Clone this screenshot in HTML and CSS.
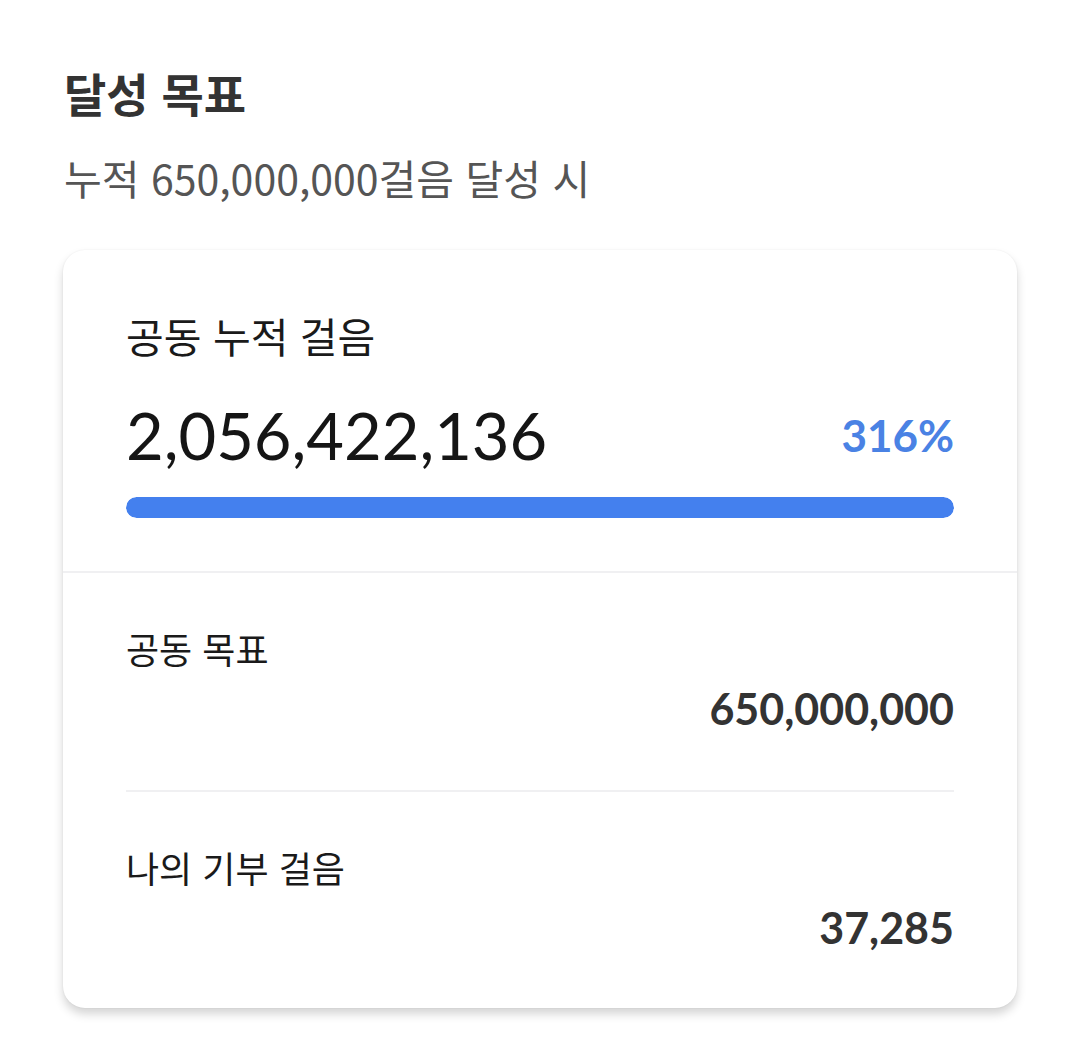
FILE: index.html
```html
<!DOCTYPE html>
<html lang="ko">
<head>
<meta charset="utf-8">
<link rel="stylesheet" href="styles.css">
</head>
<body>
<main class="page">
  <h1 class="title">달성 목표</h1>
  <p class="subtitle">누적 650,000,000걸음 달성 시</p>
  <section class="card">
    <div class="card-top">
      <div class="label-lg">공동 누적 걸음</div>
      <div class="total-row">
        <span class="total">2,056,422,136</span>
        <span class="percent">316%</span>
      </div>
      <div class="bar"><div class="bar-fill" style="width:100%"></div></div>
    </div>
    <div class="card-bottom">
      <div class="stat">
        <div class="label">공동 목표</div>
        <div class="value">650,000,000</div>
      </div>
      <div class="stat">
        <div class="label">나의 기부 걸음</div>
        <div class="value">37,285</div>
      </div>
    </div>
  </section>
</main>
</body>
</html>
```

FILE: styles.css
```css
* { box-sizing: border-box; }
html, body { margin: 0; padding: 0; background: #ffffff; }
body {
  font-family: "Noto Sans CJK KR", "Noto Sans", sans-serif;
  width: 1079px;
  height: 1046px;
  overflow: hidden;
}
.page {
  padding: 62px 62px 0 63px;
}
.title {
  margin: 0 0 0 1px;
  font-size: 46px;
  line-height: 60px;
  font-weight: 700;
  color: #333333;
}
.subtitle {
  margin: 27px 0 0 1px;
  font-size: 41px;
  line-height: 56px;
  font-weight: 400;
  color: #555555;
}
.card {
  margin-top: 45px;
  background: #ffffff;
  border-radius: 22px;
  box-shadow: 0 6px 10px rgba(0,0,0,0.17), 0 0 2px rgba(0,0,0,0.07);
  height: 758px;
}
.card-top {
  padding: 58px 63px 53px 63px;
  border-bottom: 2px solid #f0f0f2;
}
.label-lg {
  font-size: 41px;
  line-height: 54px;
  color: #1a1a1a;
}
.total-row {
  display: flex;
  justify-content: space-between;
  align-items: center;
  margin-top: 33px;
  height: 80px;
}
.total {
  font-family: Lato, "Noto Sans", sans-serif;
  font-size: 65px;
  line-height: 80px;
  color: #151515;
}
.percent {
  font-family: Lato, "Noto Sans", sans-serif;
  font-weight: 700;
  font-size: 44px;
  line-height: 53px;
  color: #4a82e4;
}
.bar {
  margin-top: 22px;
  height: 21px;
  border-radius: 11px;
  background: #e8eefb;
  overflow: hidden;
}
.bar-fill {
  height: 100%;
  border-radius: 11px;
  background: #4480ee;
}
.card-bottom {
  padding: 0 63px;
}
.stat {
  padding: 51px 0 56px;
}
.stat + .stat {
  border-top: 2px solid #f0f0f2;
}
.label {
  font-size: 36px;
  line-height: 48px;
  color: #1a1a1a;
}
.value {
  margin-top: 12px;
  text-align: right;
  font-family: Lato, "Noto Sans", sans-serif;
  font-weight: 700;
  font-size: 43px;
  line-height: 50px;
  color: #333333;
}
```
